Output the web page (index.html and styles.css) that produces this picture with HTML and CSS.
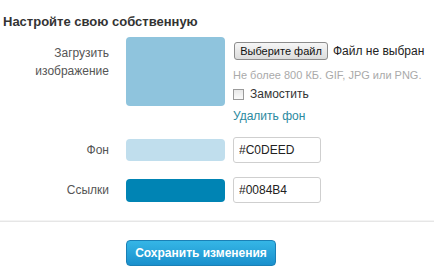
FILE: index.html
```html
<!DOCTYPE html>
<html lang="ru">
<head>
  <meta charset="UTF-8">
  <meta name="viewport" content="width=device-width, initial-scale=1.0">
  <title>Оформление</title>
  <link rel="stylesheet" href="styles.css">
</head>
<body>
  <h2 class="title">Настройте свою собственную</h2>

  <div class="design-form">
    <div class="row">
      <label class="row-label">Загрузить<br>изображение</label>
      <div class="swatch swatch-big"></div>
      <div class="upload">
        <div class="file-line">
          <span class="file-button">Выберите файл</span>
          <span class="file-name">Файл не выбран</span>
        </div>
        <div class="hint">Не более 800 КБ. GIF, JPG или PNG.</div>
        <label class="tile"><span class="checkbox"></span>Замостить</label>
        <a class="remove-link" href="#">Удалить фон</a>
      </div>
    </div>

    <div class="row row-color">
      <label class="row-label">Фон</label>
      <div class="swatch swatch-bg"></div>
      <input class="color-input" type="text" value="#C0DEED">
    </div>

    <div class="row row-color">
      <label class="row-label">Ссылки</label>
      <div class="swatch swatch-links"></div>
      <input class="color-input" type="text" value="#0084B4">
    </div>
  </div>

  <div class="actions">
    <button class="save-button" type="button">Сохранить изменения</button>
  </div>
</body>
</html>
```

FILE: styles.css
```css
body {
  font-family: "Liberation Sans", Arial, sans-serif;
  font-size: 12px;
  color: #333;
  background: #ffffff;
  margin: 0;
  padding: 0;
}
.title {
  font-size: 13px;
  font-weight: bold;
  line-height: 16px;
  color: #333;
  margin: 14px 0 7px 3px;
}
.row {
  display: grid;
  grid-template-columns: 118px 99px 1fr;
  column-gap: 8px;
  align-items: start;
}
.row-label {
  text-align: right;
  padding-right: 9px;
  color: #555;
  line-height: 18px;
  padding-top: 7px;
}
.swatch {
  border-radius: 4px;
}
.swatch-big {
  height: 69px;
  background-color: #8fc4dd;
}
.swatch-bg {
  height: 22px;
  background-color: #c0deed;
}
.swatch-links {
  height: 23px;
  background-color: #0084b4;
}
.upload {
  padding-top: 5px;
}
.file-line {
  display: flex;
  align-items: center;
  height: 18px;
}
.file-button {
  display: inline-block;
  width: 94px;
  height: 18px;
  line-height: 16px;
  box-sizing: border-box;
  margin-left: 1px;
  text-align: center;
  font-size: 11px;
  color: #111;
  border: 1px solid #8c8c8c;
  border-radius: 3px;
  background: linear-gradient(#f6f6f6, #dcdcdc);
}
.file-name {
  margin-left: 5px;
  color: #222;
}
.hint {
  margin-top: 8px;
  font-size: 11px;
  line-height: 14px;
  color: #aaa;
}
.tile {
  display: flex;
  align-items: center;
  margin-top: 5px;
  line-height: 14px;
  color: #333;
}
.checkbox {
  width: 11px;
  height: 11px;
  box-sizing: border-box;
  border: 1px solid #9a9a9a;
  background: linear-gradient(#e8e8e8, #fafafa);
  margin-right: 6px;
}
.remove-link {
  display: block;
  margin-top: 7px;
  line-height: 16px;
  color: #2b8aa0;
  text-decoration: none;
}
.row-color {
  align-items: center;
  margin-top: 13px;
}
.row-color .row-label {
  padding-top: 0;
}
.row-color:last-child {
  margin-top: 14px;
}
.color-input {
  width: 88px;
  height: 26px;
  box-sizing: border-box;
  padding: 0 5px;
  border: 1px solid #cfcfcf;
  border-radius: 3px;
  font-family: "Liberation Sans", Arial, sans-serif;
  font-size: 12px;
  color: #222;
}
.actions {
  margin-top: 18px;
  border-top: 1px solid #e6e6e6;
  box-shadow: 0 -1px 0 #f4f4f4;
  padding: 18px 0 0 126px;
}
.save-button {
  width: 150px;
  height: 26px;
  padding: 0;
  border: 1px solid #1a80b6;
  border-radius: 4px;
  background: linear-gradient(#35b6e6, #1a90cd);
  color: #ffffff;
  font-family: "Liberation Sans", Arial, sans-serif;
  font-size: 12px;
  font-weight: bold;
  cursor: pointer;
}
```
